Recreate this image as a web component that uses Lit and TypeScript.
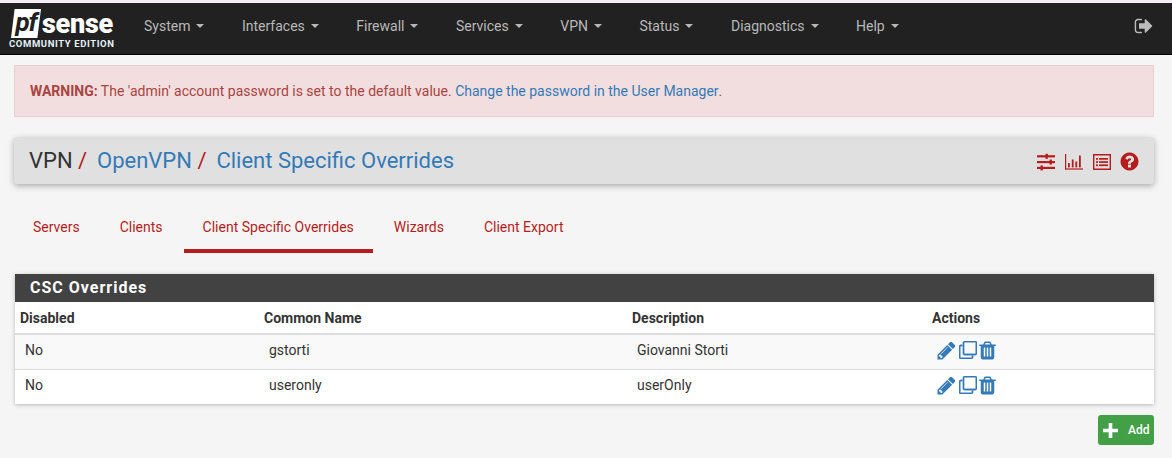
import { LitElement, css, html, svg } from 'lit';
import { customElement } from 'lit/decorators.js';

const MENU = ['System', 'Interfaces', 'Firewall', 'Services', 'VPN', 'Status', 'Diagnostics', 'Help'];
const TABS = ['Servers', 'Clients', 'Client Specific Overrides', 'Wizards', 'Client Export'];
const ROWS = [
  { disabled: 'No', name: 'gstorti', description: 'Giovanni Storti' },
  { disabled: 'No', name: 'useronly', description: 'userOnly' },
];

// font-awesome 4 outlines, all on a 1792 box
const icon = (d: string) =>
  html`<svg class="icon" viewBox="0 0 1792 1792" fill="currentColor">${svg`<path d=${d}></path>`}</svg>`;

const PENCIL =
  'M491 1536l91-91-235-235-91 91v107h128v128h107zm523-928q0-22-22-22-10 0-17 7l-542 542q-7 7-7 17 0 22 22 22 10 0 17-7l542-542q7-7 7-17zm-54-192l416 416-832 832h-416v-416zm683 96q0 53-37 90l-166 166-416-416 166-165q36-38 90-38 53 0 91 38l235 234q37 39 37 91z';
const CLONE =
  'M1664 1632v-1088q0-13-9.5-22.5t-22.5-9.5h-1088q-13 0-22.5 9.5t-9.5 22.5v1088q0 13 9.5 22.5t22.5 9.5h1088q13 0 22.5-9.5t9.5-22.5zm128-1088v1088q0 66-47 113t-113 47h-1088q-66 0-113-47t-47-113v-1088q0-66 47-113t113-47h1088q66 0 113 47t47 113zm-384-384v160h-128v-160q0-13-9.5-22.5t-22.5-9.5h-1088q-13 0-22.5 9.5t-9.5 22.5v1088q0 13 9.5 22.5t22.5 9.5h160v128h-160q-66 0-113-47t-47-113v-1088q0-66 47-113t113-47h1088q66 0 113 47t47 113z';
const TRASH =
  'M704 1376v-704q0-14-9-23t-23-9h-64q-14 0-23 9t-9 23v704q0 14 9 23t23 9h64q14 0 23-9t9-23zm256 0v-704q0-14-9-23t-23-9h-64q-14 0-23 9t-9 23v704q0 14 9 23t23 9h64q14 0 23-9t9-23zm256 0v-704q0-14-9-23t-23-9h-64q-14 0-23 9t-9 23v704q0 14 9 23t23 9h64q14 0 23-9t9-23zm-544-992h448l-48-117q-7-9-17-11h-317q-10 2-17 11zm928 32v64q0 14-9 23t-23 9h-96v948q0 83-47 143.5t-113 60.5h-832q-66 0-113-58.5t-47-141.5v-952h-96q-14 0-23-9t-9-23v-64q0-14 9-23t23-9h309l70-167q15-37 54-63t79-26h320q40 0 79 26t54 63l70 167h309q14 0 23 9t9 23z';
const HELP =
  'M1024 1376v-192q0-14-9-23t-23-9h-192q-14 0-23 9t-9 23v192q0 14 9 23t23 9h192q14 0 23-9t9-23zm256-672q0-88-55.5-163t-138.5-116-170-41q-243 0-371 213-15 24 8 42l132 100q7 6 19 6 16 0 25-12 53-68 86-92 34-24 86-24 48 0 85.5 26t37.5 59q0 38-20 61t-68 45q-63 28-115.5 86.5t-52.5 125.5v36q0 14 9 23t23 9h192q14 0 23-9t9-23q0-19 21.5-49.5t54.5-49.5q32-18 49-28.5t46-35 44.5-48 28-60.5 12.5-81zm384 192q0 209-103 385.5t-279.5 279.5-385.5 103-385.5-103-279.5-279.5-103-385.5 103-385.5 279.5-279.5 385.5-103 385.5 103 279.5 279.5 103 385.5z';
const SIGN_OUT =
  'M704 1440q0 4 1 20t.5 26.5-3 23.5-10 19.5-20.5 6.5h-320q-119 0-203.5-84.5t-84.5-203.5v-704q0-119 84.5-203.5t203.5-84.5h320q13 0 22.5 9.5t9.5 22.5q0 4 1 20t.5 26.5-3 23.5-10 19.5-20.5 6.5h-320q-66 0-113 47t-47 113v704q0 66 47 113t113 47h312l11.5 1 11.5 3 8 5.5 7 9 2 13.5zm928-544q0 26-19 45l-544 544q-19 19-45 19t-45-19-19-45v-288h-448q-26 0-45-19t-19-45v-384q0-26 19-45t45-19h448v-288q0-26 19-45t45-19 45 19l544 544q19 19 19 45z';

const sliders = html`<svg class="icon" viewBox="0 0 18 18" fill="currentColor">
  <rect x="0" y="2.2" width="18" height="2.2"></rect><rect x="8.5" y="0.8" width="2.4" height="5"></rect>
  <rect x="0" y="8" width="18" height="2.2"></rect><rect x="12.5" y="6.6" width="2.4" height="5"></rect>
  <rect x="0" y="13.8" width="18" height="2.2"></rect><rect x="3.5" y="12.4" width="2.4" height="5"></rect>
</svg>`;
const chart = html`<svg class="icon" viewBox="0 0 18 18" fill="currentColor">
  <rect x="0" y="1" width="1.2" height="15.5"></rect><rect x="0" y="15.4" width="18" height="1.2"></rect>
  <rect x="3" y="10" width="1.8" height="4.4"></rect><rect x="6.8" y="6.5" width="1.8" height="7.9"></rect>
  <rect x="10.4" y="8.5" width="1.8" height="5.9"></rect><rect x="14" y="2.5" width="1.8" height="11.9"></rect>
</svg>`;
const listAlt = html`<svg class="icon" viewBox="0 0 18 18" fill="currentColor">
  <path fill-rule="evenodd" d="M0 1h18v16H0zM1.4 2.4v13.2h15.2V2.4z"></path>
  <rect x="3" y="5" width="2" height="1.7"></rect><rect x="6" y="5" width="9" height="1.7"></rect>
  <rect x="3" y="8.2" width="2" height="1.7"></rect><rect x="6" y="8.2" width="9" height="1.7"></rect>
  <rect x="3" y="11.4" width="2" height="1.7"></rect><rect x="6" y="11.4" width="9" height="1.7"></rect>
</svg>`;

@customElement('app-root')
export class AppRoot extends LitElement {
  static styles = css`
    :host {
      display: block;
      height: 458px;
      overflow: hidden;
      background: #f5f5f5;
      color: #333;
      font-family: Roboto, 'Liberation Sans', sans-serif;
      font-size: 14px;
    }

    .icon {
      display: block;
      width: 100%;
      height: 100%;
    }

    .topline {
      height: 3px;
      background: #f6eef6;
    }

    .navbar {
      display: flex;
      align-items: center;
      height: 52px;
      background: #212121;
      border-bottom: 1px solid #000;
      box-sizing: border-box;
      padding: 0 18px 5px 0;
    }

    .logo {
      flex: none;
      align-self: flex-start;
      position: relative;
      width: 125.25px;
      height: 50px;
    }
    .logo-pf {
      position: absolute;
      left: 11px;
      top: 6px;
      width: 30px;
      height: 29px;
      background: #fff;
      clip-path: polygon(12% 0, 100% 0, 88% 100%, 0 100%);
      color: #212121;
      font: italic 700 26px/27px Roboto, sans-serif;
      letter-spacing: -1px;
      text-align: center;
    }
    .logo-sense {
      position: absolute;
      left: 42px;
      top: 6px;
      color: #fff;
      font: 900 27px/30px Roboto, sans-serif;
      letter-spacing: -0.3px;
    }
    .logo-edition {
      position: absolute;
      left: 9px;
      top: 36px;
      color: #e4f2fa;
      font: 700 9.5px/10px Roboto, sans-serif;
      letter-spacing: 0.6px;
      white-space: nowrap;
    }

    .menu {
      display: flex;
      flex: 1;
    }
    .menu a {
      display: flex;
      align-items: center;
      gap: 6px;
      padding: 0 18.75px;
      color: #b8b8b8;
    }
    .caret {
      width: 0;
      height: 0;
      border-top: 4px solid #b8b8b8;
      border-left: 4px solid transparent;
      border-right: 4px solid transparent;
    }
    .logout {
      width: 20px;
      height: 20px;
      color: #bbb;
    }

    .page {
      padding: 10px 18px 0 14px;
    }

    .alert {
      box-sizing: border-box;
      height: 52px;
      padding: 0 15px;
      display: flex;
      align-items: center;
      white-space: pre;
      background: #f2dede;
      border: 1px solid #ebccd1;
      color: #a94442;
    }
    .alert a {
      color: #337ab7;
    }
    .alert b {
      font-weight: 700;
    }

    .title {
      box-sizing: border-box;
      display: flex;
      align-items: center;
      justify-content: space-between;
      height: 47px;
      margin-top: 20px;
      padding: 0 15px;
      background: #e0e0e0;
      border-radius: 3px;
      box-shadow: 0 2px 6px rgba(0, 0, 0, 0.3);
      font-size: 22px;
      white-space: pre;
    }
    .crumbs a {
      color: #337ab7;
      margin-left: -1px;
    }
    .crumbs i {
      font-style: normal;
      color: #b71c1c;
    }
    .title-icons {
      display: flex;
      align-items: center;
      gap: 10px;
      padding-top: 2px;
      color: #b71c1c;
    }
    .title-icons span {
      width: 18px;
      height: 18px;
    }
    .title-icons .help {
      width: 21px;
      height: 21px;
      margin: 0 -1px 0 -2px;
    }

    .tabs {
      display: flex;
      margin: 21px 0 0 -1px;
      height: 48px;
    }
    .tabs a {
      box-sizing: border-box;
      display: flex;
      align-items: center;
      padding: 0 20px 4px;
      color: #b71c1c;
    }
    .tabs a.active {
      margin: 0 1px;
      padding: 0 19px;
      border-bottom: 4px solid #b71c1c;
    }

    .panel {
      margin-top: 21px;
      margin-left: 1px;
      background: #fff;
      box-shadow: 0 1px 4px rgba(0, 0, 0, 0.25);
    }
    .panel h2 {
      margin: 0;
      height: 28px;
      padding: 0 15px;
      background: #424242;
      color: #fff;
      font-size: 16px;
      font-weight: 700;
      line-height: 28px;
      letter-spacing: 1px;
    }

    .grid-row {
      display: grid;
      grid-template-columns: 244px 368px 300px 1fr;
      align-items: center;
    }
    .head {
      box-sizing: border-box;
      height: 33px;
      border-bottom: 2px solid #ddd;
      font-weight: 700;
    }
    .head span {
      padding-left: 5px;
    }
    .row {
      box-sizing: border-box;
      height: 35px;
      padding-bottom: 4px;
      border-bottom: 1px solid #ddd;
    }
    .row:nth-child(odd) {
      background: #f9f9f9;
    }
    .row:last-child {
      height: 34px;
      border-bottom: 0;
    }
    .row span {
      padding-left: 10px;
    }

    .actions {
      display: flex;
      align-items: center;
      color: #337ab7;
    }
    .actions b {
      display: block;
      flex: none;
      width: 21px;
      height: 21px;
    }
    .actions .edit {
      margin-left: -1px;
    }
    .actions .copy {
      width: 18px;
      height: 18px;
      margin-left: 2px;
      /* front sheet sits top right here */
      transform: scaleY(-1);
      stroke: currentColor;
      stroke-width: 40;
    }
    .actions .del {
      margin-left: 0;
    }

    .footer {
      display: flex;
      justify-content: flex-end;
      margin-top: 11px;
    }
    .add {
      box-sizing: border-box;
      display: flex;
      align-items: center;
      gap: 9px;
      width: 56px;
      height: 30px;
      padding: 0 0 0 4px;
      background: #43a047;
      border-radius: 3px;
      color: #fff;
      font-size: 12px;
      font-weight: 500;
    }
    .add svg {
      width: 17px;
      height: 17px;
      fill: #fff;
    }
  `;

  render() {
    return html`
      <div class="topline"></div>
      <nav class="navbar">
        <div class="logo">
          <div class="logo-pf">pf</div>
          <div class="logo-sense">sense</div>
          <div class="logo-edition">COMMUNITY EDITION</div>
        </div>
        <div class="menu">
          ${MENU.map((m) => html`<a>${m}<span class="caret"></span></a>`)}
        </div>
        <span class="logout">${icon(SIGN_OUT)}</span>
      </nav>

      <div class="page">
        <div class="alert"><b>WARNING:</b> The 'admin' account password is set to the default value. <a>Change the password in the User Manager</a>.</div>

        <div class="title">
          <div class="crumbs">VPN <i>/</i>  <a>OpenVPN</a> <i>/</i>  <a>Client Specific Overrides</a></div>
          <div class="title-icons">
            <span>${sliders}</span>
            <span>${chart}</span>
            <span>${listAlt}</span>
            <span class="help">${icon(HELP)}</span>
          </div>
        </div>

        <div class="tabs">
          ${TABS.map((t, i) => html`<a class=${i === 2 ? 'active' : ''}>${t}</a>`)}
        </div>

        <section class="panel">
          <h2>CSC Overrides</h2>
          <div class="grid-row head">
            <span>Disabled</span><span>Common Name</span><span>Description</span><span>Actions</span>
          </div>
          <div>
            ${ROWS.map(
              (r) => html`<div class="grid-row row">
                <span>${r.disabled}</span><span>${r.name}</span><span>${r.description}</span>
                <span class="actions">
                  <b class="edit">${icon(PENCIL)}</b><b class="copy">${icon(CLONE)}</b><b class="del">${icon(TRASH)}</b>
                </span>
              </div>`,
            )}
          </div>
        </section>

        <div class="footer">
          <a class="add">
            <svg viewBox="0 0 16 16"><path d="M6.3 1h3.4v5.3H15v3.4H9.7V15H6.3V9.7H1V6.3h5.3z"></path></svg>
            Add
          </a>
        </div>
      </div>
    `;
  }
}
